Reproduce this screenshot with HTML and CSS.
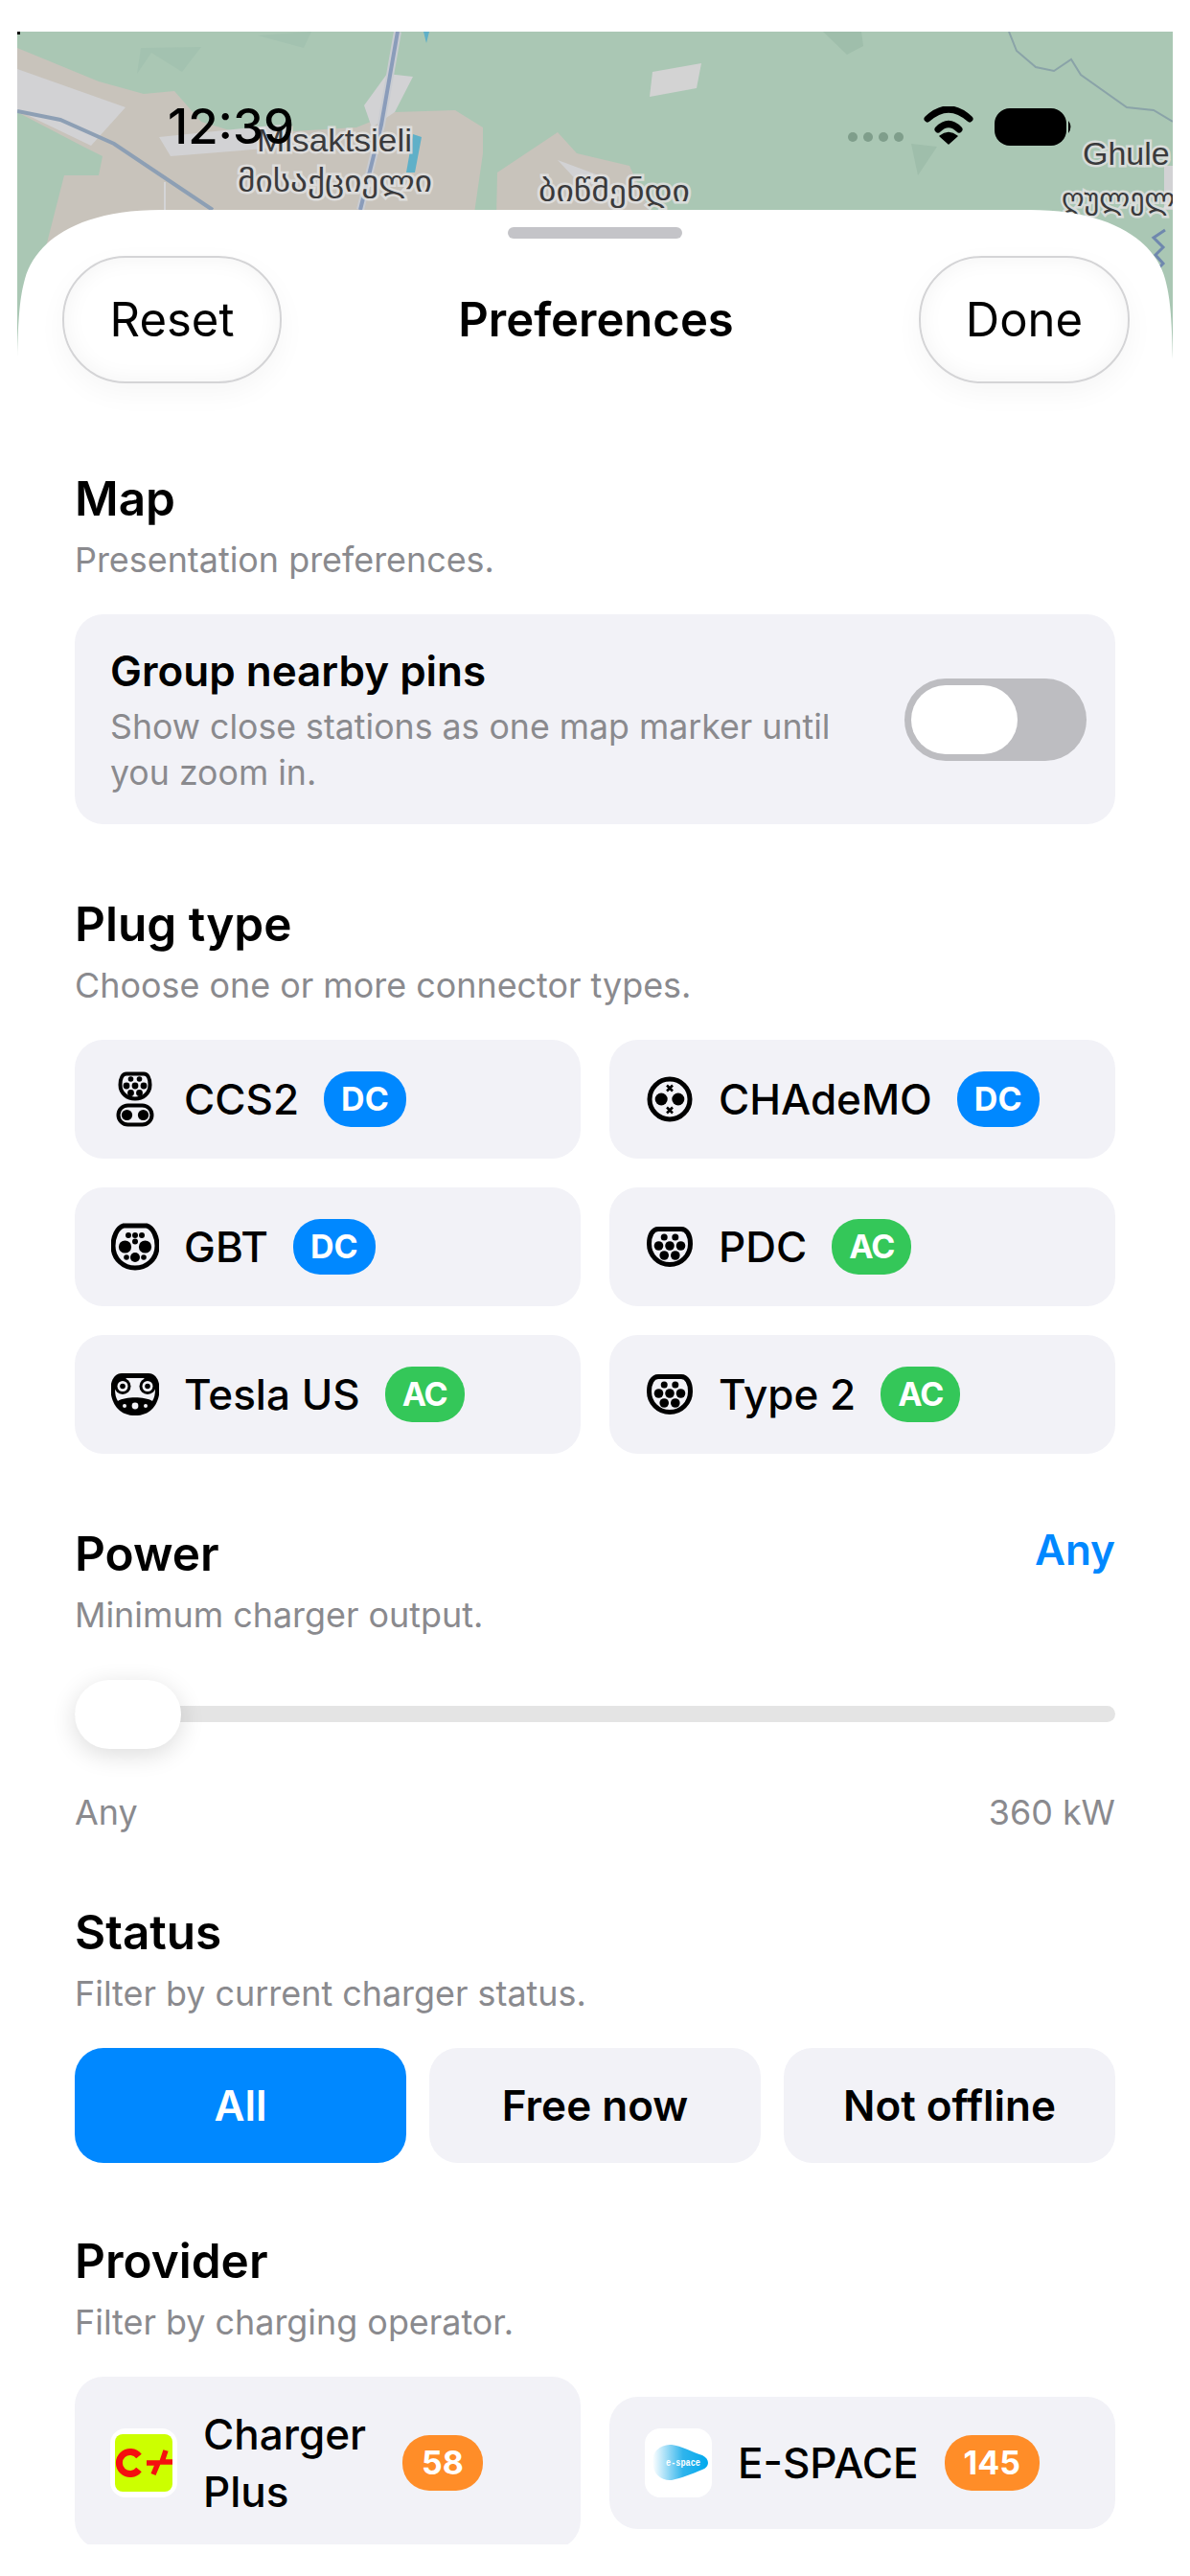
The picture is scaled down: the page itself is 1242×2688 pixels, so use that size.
FILE: index.html
```html
<!DOCTYPE html>
<html lang="en">
<head>
  <meta charset="UTF-8">
  <meta name="viewport" content="width=device-width, initial-scale=1.0">
  <title>Preferences</title>
  <link rel="stylesheet" href="styles.css">
</head>
<body>
  <!-- Plug icons -->
  <svg class="icon-defs" aria-hidden="true">
    <symbol id="plug-ccs2" viewBox="-25 -30 50 60">
      <path class="ring thin" d="M-9 -26.5 H9 C13 -26.5 15.5 -22 15.5 -15 C15.5 -6 8 -0.5 0 -0.5 C-8 -0.5 -15.5 -6 -15.5 -15 C-15.5 -22 -13 -26.5 -9 -26.5 Z"/>
      <circle cx="-4.5" cy="-21" r="2.8"/><circle cx="4.5" cy="-21" r="2.8"/>
      <circle cx="-9" cy="-14" r="3.4"/><circle cx="0" cy="-14" r="3.4"/><circle cx="9" cy="-14" r="3.4"/>
      <circle cx="-4.5" cy="-6.5" r="3.4"/><circle cx="4.5" cy="-6.5" r="3.4"/>
      <rect class="ring thin" x="-17.5" y="6.5" width="35" height="20" rx="10"/>
      <circle cx="-8.5" cy="16.5" r="5.6"/><circle cx="8.5" cy="16.5" r="5.6"/>
    </symbol>
    <symbol id="plug-chademo" viewBox="-25 -30 50 60">
      <circle class="ring" cx="0" cy="0" r="21"/>
      <circle cx="-8.8" cy="0" r="6.5"/><circle cx="8.8" cy="0" r="6.5"/>
      <path class="cross" d="M-3 -14.5 L3 -8.5 M3 -14.5 L-3 -8.5 M-3 8.5 L3 14.5 M3 8.5 L-3 14.5"/>
    </symbol>
    <symbol id="plug-gbt" viewBox="-25 -30 50 60">
      <path class="ring" d="M-12 -22 H12 C19 -20 23 -10 23 -1 C23 13 12 22 0 22 C-12 22 -23 13 -23 -1 C-23 -10 -19 -20 -12 -22 Z"/>
      <circle cx="-7" cy="-12" r="3"/><circle cx="0" cy="-12" r="3"/><circle cx="7" cy="-12" r="3"/>
      <circle cx="0" cy="-5.5" r="3"/>
      <circle cx="-10.5" cy="0" r="6.6"/><circle cx="10.5" cy="0" r="6.6"/>
      <circle cx="0" cy="11" r="5"/><circle cx="-9" cy="11" r="2.8"/><circle cx="9" cy="11" r="2.8"/>
    </symbol>
    <symbol id="plug-type2" viewBox="-25 -30 50 60">
      <path class="ring" d="M-12 -18.5 H12 C18 -18.5 21.5 -12 21.5 -3 C21.5 9 12 18.5 0 18.5 C-12 18.5 -21.5 9 -21.5 -3 C-21.5 -12 -18 -18.5 -12 -18.5 Z"/>
      <circle cx="-5.8" cy="-10" r="3.5"/><circle cx="5.8" cy="-10" r="3.5"/>
      <circle cx="-11.5" cy="-1" r="4.8"/><circle cx="0" cy="-1" r="4.8"/><circle cx="11.5" cy="-1" r="4.8"/>
      <circle cx="-5.8" cy="9" r="4.8"/><circle cx="5.8" cy="9" r="4.8"/>
    </symbol>
    <symbol id="plug-tesla" viewBox="-25 -30 50 60">
      <path d="M-14 -22 H14 C21 -22 25.5 -15 25.5 -6 C25.5 8 18 22 0 22 C-18 22 -25.5 8 -25.5 -6 C-25.5 -15 -21 -22 -14 -22 Z"/>
      <path class="white" d="M-9 -17 H9 L21 -6 C21 0 20 4 18 7 C10 2 -10 2 -18 7 C-20 4 -21 0 -21 -6 Z"/>
      <circle cx="-13" cy="-8.5" r="8.5"/><circle cx="13" cy="-8.5" r="8.5"/>
      <circle class="white" cx="-13" cy="-8.5" r="5.5"/><circle class="white" cx="13" cy="-8.5" r="5.5"/>
      <circle cx="-13" cy="-8.5" r="2.8"/><circle cx="13" cy="-8.5" r="2.8"/>
      <circle class="white" cx="-11" cy="12" r="2"/><circle class="white" cx="0" cy="12" r="3.4"/><circle class="white" cx="11" cy="12" r="2"/>
    </symbol>
  </svg>

  <div class="screen">
    <!-- Map behind the sheet -->
    <svg class="map" viewBox="18 33 1206 342" aria-hidden="true">
      <rect x="18" y="33" width="1206" height="342" fill="#aac7b4"/>
      <rect x="18" y="33" width="3" height="3" fill="#000"/>
      <path fill="#a3c2b0" d="M147 50 L210 49 L190 75 L158 55 L143 77 Z M269 37 L325 33 L317 50 Z"/>
      <path fill="#9fbeab" d="M859 33 L899 33 L901 48 L884 57 Z M951 150 L978 153 L958 183 Z"/>
      <path fill="#c8c3bb" d="M18 50 L103 85 L150 98 L182 95 L210 127 L253 140 L372 133 L412 117 L475 115 L504 133 L504 160 L473 375 L18 375 L67 183 L103 183 L107 163 L87 153 L18 117 Z"/>
      <path fill="#c8c3bb" d="M519 180 L582 138 L602 160 L657 173 L677 217 L677 375 L515 375 Z"/>
      <path fill="#d2d2d4" d="M18 72 L131 112 L95 152 L18 115 Z M166 143 L293 130 L301 153 L178 163 Z M380 110 L404 77 L431 80 L412 117 L388 133 Z M582 167 L625 183 L610 197 Z"/>
      <path fill="#d3d3d3" d="M681 75 L732 66 L727 92 L678 101 Z"/>
      <path fill="#d2d2d4" d="M1215 173 L1224 173 L1224 219 L1215 219 Z"/>
      <path fill="none" stroke="#c9ccd2" stroke-width="8" d="M415 33 L398 130 L376 219"/>
      <path fill="none" stroke="#8a9cba" stroke-width="4" d="M415 33 L398 130 L376 219"/>
      <path fill="none" stroke="#d9dbe0" stroke-width="1.5" d="M172 190 L172 219"/>
      <path fill="none" stroke="#8d9fb4" stroke-width="4" d="M18 116 L63 125 L119 150 L222 219"/>
      <path fill="none" stroke="#8aa3a8" stroke-width="2" d="M1053 33 L1061 53 L1081 70 L1100 74 L1118 62 L1128 78 L1176 112 L1204 115 L1224 127"/>
      <path fill="#5fb0c8" d="M431 140 L440 143 L433 180 L424 180 Z M442 33 L448 33 L445 45 Z"/>
      <path fill="none" stroke="#6f88ae" stroke-width="3" d="M1216 240 L1204 248 L1214 258 L1206 266 L1214 275 L1204 285"/>
      <text class="map-label" x="268" y="158" textLength="162" lengthAdjust="spacingAndGlyphs">Misaktsieli</text>
      <text class="map-label geo" x="248" y="200" textLength="203" lengthAdjust="spacingAndGlyphs">მისაქციელი</text>
      <text class="map-label geo" x="562" y="210" textLength="158" lengthAdjust="spacingAndGlyphs">ბიწმენდი</text>
      <text class="map-label" x="1130" y="172">Ghule</text>
      <text class="map-label geo" x="1108" y="218">ღულელი</text>
    </svg>

    <!-- Status bar over the map -->
    <div class="status-bar">
      <span class="status-time">12:39</span>
      <svg class="status-icons" viewBox="0 0 240 50" aria-hidden="true">
        <g fill="#7f9e8b"><circle cx="8" cy="32" r="5"/><circle cx="24" cy="32" r="5"/><circle cx="40" cy="32" r="5"/><circle cx="56" cy="32" r="5"/></g>
        <path d="M86 13 Q108 -7 130 13" fill="none" stroke="#000" stroke-width="7" stroke-linecap="round"/>
        <path d="M97 24 Q108 13 119 24" fill="none" stroke="#000" stroke-width="7" stroke-linecap="round"/>
        <path d="M108 39 L99 31 Q108 24 117 31 Z" stroke="#000" stroke-width="1.5" stroke-linejoin="round"/>
        <rect x="156" y="2" width="75" height="39" rx="16"/>
        <path d="M233 15 Q238 21 233 28 Z"/>
      </svg>
    </div>

    <!-- Sheet -->
    <div class="sheet">
      <div class="handle"></div>
      <header class="sheet-header">
        <button class="glass-btn reset-btn">Reset</button>
        <h1>Preferences</h1>
        <button class="glass-btn done-btn">Done</button>
      </header>

      <main class="content">
        <section class="first">
          <h2>Map</h2>
          <p class="sub">Presentation preferences.</p>
          <div class="toggle-card">
            <div class="toggle-text">
              <h3>Group nearby pins</h3>
              <p>Show close stations as one map marker until you zoom in.</p>
            </div>
            <div class="toggle"><div class="toggle-knob"></div></div>
          </div>
        </section>

        <section>
          <h2>Plug type</h2>
          <p class="sub">Choose one or more connector types.</p>
          <div class="plug-grid">
            <div class="chip"><svg class="plug"><use href="#plug-ccs2"/></svg><span>CCS2</span><span class="badge blue">DC</span></div>
            <div class="chip"><svg class="plug"><use href="#plug-chademo"/></svg><span>CHAdeMO</span><span class="badge blue">DC</span></div>
            <div class="chip"><svg class="plug"><use href="#plug-gbt"/></svg><span>GBT</span><span class="badge blue">DC</span></div>
            <div class="chip"><svg class="plug"><use href="#plug-type2"/></svg><span>PDC</span><span class="badge green">AC</span></div>
            <div class="chip"><svg class="plug"><use href="#plug-tesla"/></svg><span>Tesla US</span><span class="badge green">AC</span></div>
            <div class="chip"><svg class="plug"><use href="#plug-type2"/></svg><span>Type 2</span><span class="badge green">AC</span></div>
          </div>
        </section>

        <section class="power">
          <div class="power-head">
            <h2>Power</h2>
            <span class="power-value">Any</span>
          </div>
          <p class="sub">Minimum charger output.</p>
          <div class="slider">
            <div class="slider-track"><div class="slider-thumb"></div></div>
          </div>
          <div class="slider-labels"><span>Any</span><span>360 kW</span></div>
        </section>

        <section class="status">
          <h2>Status</h2>
          <p class="sub">Filter by current charger status.</p>
          <div class="status-options">
            <div class="option active">All</div>
            <div class="option">Free now</div>
            <div class="option">Not offline</div>
          </div>
        </section>

        <section class="providers">
          <h2>Provider</h2>
          <p class="sub">Filter by charging operator.</p>
          <div class="provider-grid">
            <div class="provider">
              <svg class="provider-logo" viewBox="0 0 70 72" aria-hidden="true">
                <rect x="5" y="6" width="60" height="60" rx="8" fill="#ccff00"/>
                <path d="M30 29 A11.5 11.5 0 1 0 30 43" fill="none" stroke="#f50f0f" stroke-width="7"/>
                <path d="M38 36 H50 L45 48 M58 23 L54 35 H65" fill="none" stroke="#f50f0f" stroke-width="5.5"/>
              </svg>
              <span class="provider-name wrapped">Charger Plus</span>
              <span class="badge orange">58</span>
            </div>
            <div class="provider">
              <svg class="provider-logo" viewBox="0 0 70 72" aria-hidden="true">
                <defs>
                  <linearGradient id="espace-fade" x1="0" x2="1" y1="0" y2="0">
                    <stop offset="0" stop-color="#ffffff"/>
                    <stop offset="0.55" stop-color="#2fb4ec"/>
                    <stop offset="1" stop-color="#00a9ee"/>
                  </linearGradient>
                </defs>
                <path d="M8 35 C8 22 18 17 28 17 C38 18 50 25 60 28 C68 32 68 40 60 43 C50 47 38 52 28 54 C18 55 8 48 8 35 Z" fill="url(#espace-fade)"/>
                <text class="espace-text" x="22" y="38.5" textLength="36" lengthAdjust="spacingAndGlyphs">e-space</text>
              </svg>
              <span class="provider-name">E-SPACE</span>
              <span class="badge orange">145</span>
            </div>
          </div>
        </section>
      </main>
    </div>
  </div>
</body>
</html>
```

FILE: styles.css
```css
/* General Styles */
* {
  box-sizing: border-box;
}

html, body {
  margin: 0;
  padding: 0;
  background: #fff;
}

body {
  width: 1242px;
  height: 2688px;
  overflow: hidden;
  font-family: 'Inter', 'Liberation Sans', sans-serif;
  color: #000;
}

.icon-defs {
  position: absolute;
  width: 0;
  height: 0;
}

.screen {
  position: relative;
  height: 2688px;
  padding-top: 219px;
}

/* Map */
.map {
  position: absolute;
  left: 18px;
  top: 33px;
  width: 1206px;
  height: 342px;
}

.map-label {
  font-family: 'Liberation Sans', sans-serif;
  font-size: 34px;
  fill: #3a3a3c;
  stroke: rgba(225, 225, 225, 0.85);
  stroke-width: 5px;
  paint-order: stroke;
}

.map-label.geo {
  font-family: 'DejaVu Sans', sans-serif;
  font-size: 30px;
}

/* Status Bar */
.status-bar {
  position: absolute;
  left: 175px;
  top: 103px;
  width: 947px;
  display: flex;
  justify-content: space-between;
  align-items: flex-start;
}

.status-time {
  font-size: 51px;
  font-weight: 500;
  line-height: 58px;
}

.status-icons {
  width: 240px;
  height: 50px;
  margin-top: 8px;
}

/* Sheet */
.sheet {
  position: relative;
  margin: 0 18px;
  height: 2436px;
  background: #fff;
  overflow: hidden;
  clip-path: path("M0 156 C1 110 3 90 8 72 C18 35 60 0 150 0 H1056 C1146 0 1188 35 1198 72 C1203 90 1205 110 1206 156 V2436 H0 Z");
}

.handle {
  width: 182px;
  height: 12px;
  margin: 18px auto 0;
  background: #c4c4c8;
  border-radius: 6px;
}

.sheet-header {
  display: grid;
  grid-template-columns: 1fr auto 1fr;
  align-items: center;
  margin-top: 18px;
  padding: 0 45px 0 47px;
}

.sheet-header h1 {
  margin: 0;
  font-size: 49px;
  font-weight: 600;
}

.glass-btn {
  height: 133px;
  padding: 0;
  background: #fff;
  border: 2px solid #d4d4d6;
  border-radius: 66px;
  box-shadow: inset 0 0 24px rgba(0, 0, 0, 0.05), 0 10px 30px rgba(0, 0, 0, 0.04);
  font-family: inherit;
  font-size: 49px;
  color: #000;
}

.reset-btn {
  width: 229px;
}

.done-btn {
  width: 220px;
  justify-self: end;
}

/* Main Content */
.content {
  padding: 0 60px;
}

section {
  margin-top: 74px;
}

section.first {
  margin-top: 90px;
}

section.status {
  margin-top: 70px;
}

section.providers {
  margin-top: 72px;
}

h2 {
  margin: 0;
  font-size: 49.5px;
  font-weight: 600;
  line-height: 60px;
}

.sub {
  margin: 9px 0 32px;
  font-size: 35.9px;
  line-height: 50px;
  color: #8a8a8e;
}

/* Toggle Card */
.toggle-card {
  display: flex;
  align-items: center;
  justify-content: space-between;
  height: 219px;
  padding: 0 30px 0 37px;
  background: #f2f2f7;
  border-radius: 30px;
}

.toggle-text {
  width: 770px;
  padding-top: 3px;
}

.toggle-text h3 {
  margin: 0 0 8px;
  font-size: 44px;
  font-weight: 600;
  line-height: 52px;
}

.toggle-text p {
  margin: 0;
  font-size: 35.7px;
  line-height: 48px;
  color: #8a8a8e;
}

.toggle {
  width: 190px;
  height: 86px;
  padding: 7px;
  background: #bdbdc1;
  border-radius: 43px;
}

.toggle-knob {
  width: 111px;
  height: 72px;
  background: #fff;
  border-radius: 36px;
}

/* Plug Type */
.plug-grid {
  display: grid;
  grid-template-columns: 1fr 1fr;
  gap: 30px;
}

.chip {
  display: flex;
  align-items: center;
  gap: 26px;
  height: 124px;
  padding-left: 38px;
  background: #f2f2f7;
  border-radius: 30px;
  font-size: 44px;
  font-weight: 500;
}

.plug {
  flex: none;
  width: 50px;
  height: 60px;
}

.ring {
  fill: none;
  stroke: #000;
  stroke-width: 5;
}

.ring.thin {
  stroke-width: 4;
}

.cross {
  fill: none;
  stroke: #000;
  stroke-width: 2.5;
}

.white {
  fill: #f2f2f7;
}

.badge {
  flex: none;
  height: 58px;
  padding: 0 20px;
  border-radius: 28px;
  font-size: 34px;
  font-weight: 700;
  line-height: 58px;
  color: #fff;
}

.chip .badge {
  padding: 0 18px;
}

.blue {
  background: #0088ff;
}

.green {
  background: #34c759;
  letter-spacing: -1px;
}

.orange {
  background: #ff8d28;
}

/* Power */
.power-head {
  display: flex;
  justify-content: space-between;
  align-items: flex-start;
}

.power-value {
  font-size: 44px;
  font-weight: 600;
  line-height: 52px;
  color: #0088ff;
}

.power .sub {
  margin-bottom: 0;
}

.slider {
  margin-top: 44px;
  padding: 26px 0 29px;
}

.slider-track {
  display: flex;
  align-items: center;
  height: 17px;
  background: #e4e4e4;
  border-radius: 9px;
}

.slider-thumb {
  flex: none;
  width: 111px;
  height: 72px;
  background: #fff;
  border-radius: 36px;
  box-shadow: 0 6px 26px rgba(0, 0, 0, 0.14);
}

.slider-labels {
  display: flex;
  justify-content: space-between;
  margin-top: 40px;
  font-size: 35.9px;
  line-height: 50px;
  color: #8a8a8e;
}

/* Status */
.status-options {
  display: grid;
  grid-template-columns: repeat(3, 1fr);
  gap: 24px;
}

.option {
  height: 120px;
  background: #f2f2f7;
  border-radius: 30px;
  font-size: 44px;
  font-weight: 600;
  line-height: 120px;
  text-align: center;
}

.option.active {
  background: #0088ff;
  color: #fff;
}

/* Provider */
.provider-grid {
  display: grid;
  grid-template-columns: 1fr 1fr;
  gap: 30px;
  align-items: center;
}

.provider {
  display: flex;
  align-items: center;
  gap: 27px;
  min-height: 138px;
  padding: 30px 37px;
  background: #f2f2f7;
  border-radius: 30px;
  font-size: 44px;
  font-weight: 500;
  line-height: 60px;
}

.provider-logo {
  flex: none;
  width: 70px;
  height: 72px;
  background: #fff;
  border-radius: 16px;
}

.provider-name.wrapped {
  width: 181px;
}

.espace-text {
  font-family: 'Liberation Mono', monospace;
  font-size: 10px;
  font-weight: 700;
  fill: #fff;
}
```
